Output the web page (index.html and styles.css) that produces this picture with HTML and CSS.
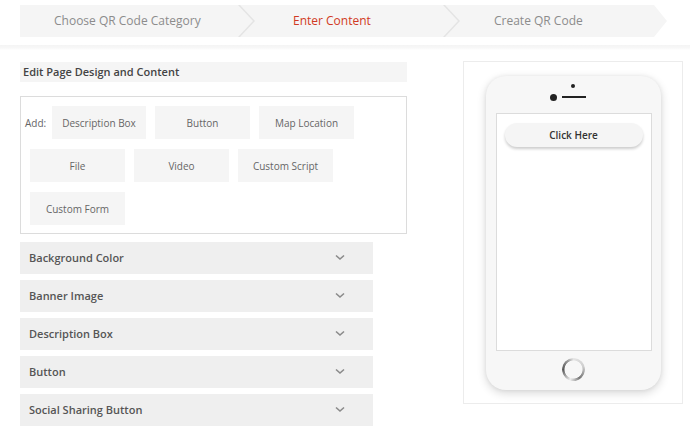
FILE: index.html
```html
<!DOCTYPE html>
<html>
<head>
<meta charset="utf-8">
<link rel="stylesheet" href="styles.css">
</head>
<body>
<header class="header">
  <nav class="stepper">
    <div class="step step-1">Choose QR Code Category</div>
    <div class="sep"><svg width="17" height="32" viewBox="0 0 17 32"><polyline points="0,-1 16,16 0,33" fill="none" stroke="#e4e4e4" stroke-width="1.5"/></svg></div>
    <div class="step step-2 active">Enter Content</div>
    <div class="sep"><svg width="17" height="32" viewBox="0 0 17 32"><polyline points="0,-1 16,16 0,33" fill="none" stroke="#e4e4e4" stroke-width="1.5"/></svg></div>
    <div class="step step-3">Create QR Code</div>
    <div class="tip"></div>
  </nav>
  <div class="header-line"></div>
</header>
<main class="main">
  <section class="editor">
    <div class="editor-title">Edit Page Design and Content</div>
    <div class="add-box">
      <span class="add-label">Add:</span>
      <div class="add-btn first">Description Box</div>
      <div class="add-btn">Button</div>
      <div class="add-btn">Map Location</div>
      <div class="add-btn">File</div>
      <div class="add-btn">Video</div>
      <div class="add-btn">Custom Script</div>
      <div class="add-btn">Custom Form</div>
    </div>
    <div class="accordion">
      <div class="acc-row"><span>Background Color</span><svg class="chev" width="10" height="7" viewBox="0 0 10 7"><polyline points="1,1.5 5,5 9,1.5" fill="none" stroke="#8a8a8a" stroke-width="1.6"/></svg></div>
      <div class="acc-row"><span>Banner Image</span><svg class="chev" width="10" height="7" viewBox="0 0 10 7"><polyline points="1,1.5 5,5 9,1.5" fill="none" stroke="#8a8a8a" stroke-width="1.6"/></svg></div>
      <div class="acc-row"><span>Description Box</span><svg class="chev" width="10" height="7" viewBox="0 0 10 7"><polyline points="1,1.5 5,5 9,1.5" fill="none" stroke="#8a8a8a" stroke-width="1.6"/></svg></div>
      <div class="acc-row"><span>Button</span><svg class="chev" width="10" height="7" viewBox="0 0 10 7"><polyline points="1,1.5 5,5 9,1.5" fill="none" stroke="#8a8a8a" stroke-width="1.6"/></svg></div>
      <div class="acc-row"><span>Social Sharing Button</span><svg class="chev" width="10" height="7" viewBox="0 0 10 7"><polyline points="1,1.5 5,5 9,1.5" fill="none" stroke="#8a8a8a" stroke-width="1.6"/></svg></div>
    </div>
  </section>
  <aside class="preview">
    <div class="phone">
      <div class="camera"></div>
      <div class="speaker-row"><span class="speaker-dot"></span><span class="speaker-line"></span></div>
      <div class="screen">
        <div class="click-btn">Click Here</div>
      </div>
      <div class="home-row"><div class="home"></div></div>
    </div>
  </aside>
</main>
</body>
</html>
```

FILE: styles.css
```css
* { box-sizing: border-box; }
html, body { margin: 0; padding: 0; background: #fff; }
body {
  font-family: "Open Sans", "Liberation Sans", sans-serif;
  width: 690px;
  height: 435px;
  overflow: hidden;
}
.header { padding-top: 5px; }
.stepper {
  display: flex;
  margin-left: 20px;
  height: 32px;
}
.step {
  background: #f5f5f5;
  color: #8c8c8c;
  font-size: 12px;
  line-height: 32px;
  white-space: nowrap;
}
.step.active { color: #d13a24; }
.step-1 { width: 218px; padding-left: 34px; }
.step-2 { width: 188px; padding-left: 38px; }
.step-3 { width: 194px; padding-left: 34px; }
.sep { width: 17px; height: 32px; background: #f5f5f5; }
.sep svg { display: block; }
.tip {
  width: 13px;
  height: 32px;
  background: #f5f5f5;
  clip-path: polygon(0 0, 0 0, 100% 50%, 0 100%, 0 100%);
}
.header-line {
  margin-top: 8px;
  height: 5px;
  background: linear-gradient(#f4f4f4, #f8f8f8 60%, #fff);
}
.main {
  display: flex;
  padding: 11px 0 0 20px;
}
.editor { width: 387px; margin-top: 1px; }
.editor-title {
  background: #f5f5f5;
  height: 20px;
  line-height: 20px;
  padding-left: 3px;
  font-size: 11px;
  font-weight: 600;
  color: #444;
}
.add-box {
  margin-top: 14px;
  border: 1px solid #dcdcdc;
  height: 138px;
  display: flex;
  flex-wrap: wrap;
  align-content: flex-start;
  align-items: center;
  gap: 10px 9px;
  padding: 9px 0 0 9px;
}
.add-label {
  width: 18px;
  margin-left: -5px;
  white-space: nowrap;
  font-size: 10px;
  color: #666;
}
.add-btn {
  width: 95px;
  height: 33px;
  background: #f5f5f5;
  color: #666;
  font-size: 10px;
  display: flex;
  align-items: center;
  justify-content: center;
}
.add-btn.first { width: 94px; }
.accordion {
  margin-top: 8px;
  width: 353px;
  display: flex;
  flex-direction: column;
  gap: 6px;
}
.acc-row {
  height: 32px;
  background: #efefef;
  display: flex;
  align-items: center;
  justify-content: space-between;
  padding: 0 28px 1px 9px;
  font-size: 11px;
  font-weight: 600;
  color: #555;
}
.chev { display: block; }
.preview {
  margin-left: 56px;
  width: 220px;
  height: 343px;
  border: 1px solid #ececec;
  padding-top: 14px;
  display: flex;
  justify-content: center;
}
.phone {
  width: 175px;
  height: 314px;
  border-radius: 20px;
  background: #f7f7f7;
  box-shadow: 0 3px 10px rgba(0,0,0,0.16), 0 0 4px rgba(0,0,0,0.06);
  padding: 8px 9px 0 10px;
  display: flex;
  flex-direction: column;
  align-items: center;
}
.camera {
  width: 4px;
  height: 4px;
  border-radius: 50%;
  background: #222;
  margin-right: 2px;
}
.speaker-row {
  margin-top: 5px;
  height: 8px;
  display: flex;
  align-items: center;
  gap: 5px;
  margin-right: 11px;
}
.speaker-dot {
  flex: none;
  width: 7px;
  height: 7px;
  border-radius: 50%;
  background: #222;
}
.speaker-line {
  flex: none;
  width: 24px;
  height: 2px;
  background: #222;
}
.screen {
  margin-top: 12px;
  width: 156px;
  height: 238px;
  background: #fff;
  border: 1px solid #dcdcdc;
  padding: 9px 8px 0 8px;
}
.click-btn {
  height: 24px;
  border-radius: 12px;
  background: #f5f5f5;
  box-shadow: 0 2px 3px rgba(0,0,0,0.2);
  display: flex;
  align-items: center;
  justify-content: center;
  font-size: 10px;
  font-weight: 600;
  color: #333;
}
.home-row { margin-top: 7px; }
.home {
  width: 23px;
  height: 23px;
  border-radius: 50%;
  background: conic-gradient(from 0deg, #e4e4e4, #cfcfcf 20%, #777 40%, #eee 55%, #555 75%, #999 90%, #e4e4e4);
  -webkit-mask: radial-gradient(circle, transparent 8.6px, #000 9.4px);
  mask: radial-gradient(circle, transparent 8.6px, #000 9.4px);
}
```
